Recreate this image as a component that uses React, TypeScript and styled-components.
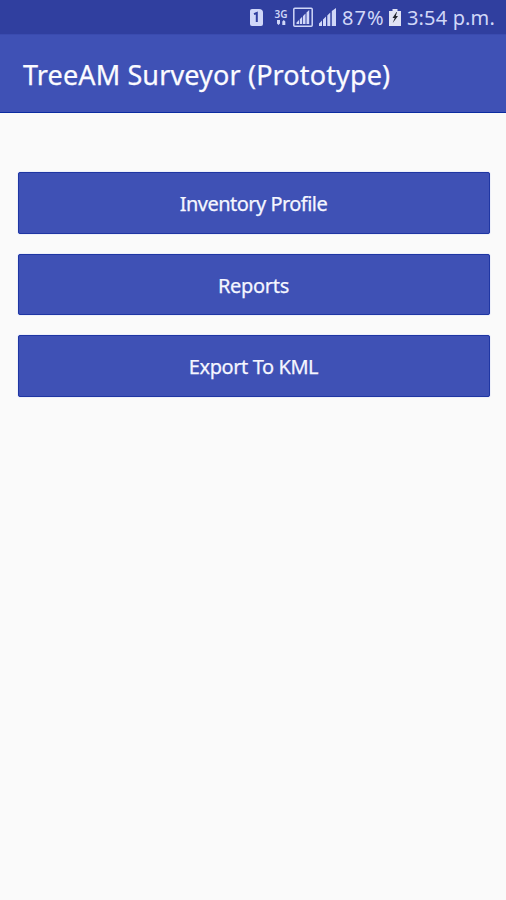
import React from "react";
import styled, { createGlobalStyle } from "styled-components";

const GlobalStyle = createGlobalStyle`
  * { box-sizing: border-box; }
  body { margin: 0; background: #fafafa; font-family: "Noto Sans", sans-serif; }
`;

const Screen = styled.div`
  display: flex;
  flex-direction: column;
  width: 100%;
  height: 900px;
  background: #fafafa;
`;

const StatusBar = styled.header`
  display: flex;
  align-items: center;
  height: 34px;
  padding-left: 248px;
  background: #303f9f;
  color: #d0d7f8;
`;

const StatusIcons = styled.svg`
  flex: none;
  width: 94px;
  height: 34px;
`;

const StatusText = styled.span<{ $width: number; $spacing: number }>`
  flex: none;
  width: ${(p) => p.$width}px;
  padding-top: 2px;
  font-size: 20px;
  line-height: 32px;
  letter-spacing: ${(p) => p.$spacing}px;
  white-space: nowrap;
`;

const BatteryIcon = styled.svg`
  flex: none;
  width: 14px;
  height: 34px;
  margin-right: 5px;
`;

const AppBar = styled.div`
  display: flex;
  align-items: center;
  height: 79px;
  padding: 3px 23px 0;
  background: #3f51b5;
  border-bottom: 1px solid #0b2ba0;
  box-shadow: inset 0 1px #3a4baf;
`;

const Title = styled.h1`
  margin: 0;
  color: #fbfbff;
  font-size: 27px;
  font-weight: 400;
  line-height: 36px;
  letter-spacing: 0.13px;
  white-space: nowrap;
  -webkit-text-stroke: 0.25px currentColor;
`;

const Menu = styled.main`
  display: flex;
  flex-direction: column;
  gap: 20.3px;
  padding: 59.4px 16.5px 0 17.5px;
`;

const MenuButton = styled.button<{ $spacing: number }>`
  height: 61.2px;
  padding: 1.6px 0 0;
  border: 1px solid #1f36a3;
  border-radius: 2px;
  background: #3f51b5;
  box-shadow: 0 0 1px #8798ee;
  color: #f5f6ff;
  font: 400 20px "Noto Sans", sans-serif;
  letter-spacing: ${(p) => p.$spacing}px;
  -webkit-text-stroke: 0.25px currentColor;
`;

const actions = [
  { label: "Inventory Profile", spacing: -0.53 },
  { label: "Reports", spacing: -0.3 },
  { label: "Export To KML", spacing: -0.42 },
];

export default function App() {
  return (
    <Screen>
      <GlobalStyle />
      <StatusBar>
        <StatusIcons viewBox="0 0 94 34" fill="currentColor" aria-hidden="true">
          <path d="M4 9h7q4 0 4 3.5V24q0 2-2 2H4q-2 0-2-2V11q0-2 2-2Z" />
          <path d="M6 14.2 8.8 13V22" fill="none" stroke="#303f9f" strokeWidth="2" />
          <text x="26.5" y="17.8" fontSize="11" fontWeight="600" textLength="13" lengthAdjust="spacingAndGlyphs">3G</text>
          <path d="M29 20h3v3.5L30.5 25 29 23.5ZM34.3 25v-3.5L35.8 20l1.5 1.5V25Z" />
          <rect x="45.8" y="8.2" width="18.4" height="18" rx="1" fill="none" stroke="currentColor" strokeWidth="1.5" />
          <path d="M48.5 22.5 51 20v4h-2.5ZM51.8 19.2l2.4-2.4V24h-2.4ZM55 16l2.5-2.5V24H55ZM58.5 12.5 61.2 10v14h-2.7Z" />
          <path d="M71 23.5 74 20.5V26h-3ZM75 19.5l3-3V26h-3ZM79.3 15.5l3-3V26h-3ZM83.8 11 88 8v18h-4.2Z" />
        </StatusIcons>
        <StatusText $width={46} $spacing={1}>87%</StatusText>
        <BatteryIcon viewBox="0 0 14 34" aria-hidden="true">
          <path d="M4.5 9h5v2H13v15H1V11h3.5Z" fill="#e0e3f4" />
          <path d="M8.5 12 4.5 18h2.2l-2 5 5.3-7H7.8L9 12Z" fill="#20242d" />
        </BatteryIcon>
        <StatusText $width={94} $spacing={0.15}>3:54 p.m.</StatusText>
      </StatusBar>
      <AppBar>
        <Title>TreeAM Surveyor (Prototype)</Title>
      </AppBar>
      <Menu>
        {actions.map((a) => (
          <MenuButton key={a.label} type="button" $spacing={a.spacing}>
            {a.label}
          </MenuButton>
        ))}
      </Menu>
    </Screen>
  );
}
